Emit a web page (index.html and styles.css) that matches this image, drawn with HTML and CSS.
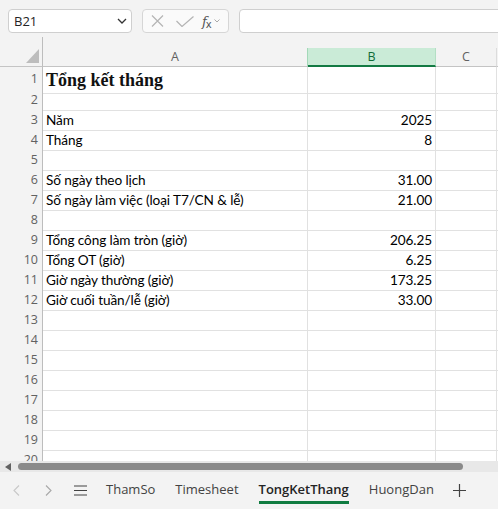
FILE: index.html
```html
<!DOCTYPE html>
<html lang="vi">
<head>
<meta charset="utf-8">
<title>TongKetThang</title>
<link rel="stylesheet" href="styles.css">
</head>
<body>
<div class="app">
  <div class="toolbar">
    <div class="namebox">
      <span class="nb-text">B21</span>
      <svg class="nb-chev" width="10" height="6" viewBox="0 0 10 6"><polyline points="1,1 5,5 9,1" fill="none" stroke="#333" stroke-width="1.3"/></svg>
    </div>
    <div class="fxbtns">
      <svg class="ic-x" width="13" height="12" viewBox="0 0 13 12"><path d="M1 0.5 L12 11.5 M12 0.5 L1 11.5" stroke="#b4b4b4" stroke-width="1.2" fill="none"/></svg>
      <svg class="ic-check" width="18" height="11" viewBox="0 0 18 11"><polyline points="0.5,5 6,10.5 17.5,0.5" fill="none" stroke="#b4b4b4" stroke-width="1.2"/></svg>
      <span class="fx">f<span class="fx-sub">x</span></span>
      <svg class="ic-chev-s" width="6" height="4" viewBox="0 0 6 4"><polyline points="0.5,0.5 3,3 5.5,0.5" fill="none" stroke="#aaa" stroke-width="1"/></svg>
    </div>
    <div class="formula"></div>
  </div>

  <div class="sheet">
    <div class="hdr-row">
      <div class="corner"><svg class="corner-tri" width="13" height="14" viewBox="0 0 13 14"><polygon points="0,14 13,14 13,0" fill="#bdbdbd"/></svg></div>
      <div class="colh colh-a">A</div>
      <div class="colh colh-b">B</div>
      <div class="colh colh-c">C</div>
      <div class="colh colh-rest"></div>
    </div>

    <div class="row row-title"><div class="rh">1</div><div class="cell title">Tổng kết tháng</div><div class="cell num"></div><div class="cell"></div><div class="cell"></div></div>
    <div class="row"><div class="rh">2</div><div class="cell"></div><div class="cell num"></div><div class="cell"></div><div class="cell"></div></div>
    <div class="row"><div class="rh">3</div><div class="cell">Năm</div><div class="cell num">2025</div><div class="cell"></div><div class="cell"></div></div>
    <div class="row"><div class="rh">4</div><div class="cell">Tháng</div><div class="cell num">8</div><div class="cell"></div><div class="cell"></div></div>
    <div class="row"><div class="rh">5</div><div class="cell"></div><div class="cell num"></div><div class="cell"></div><div class="cell"></div></div>
    <div class="row"><div class="rh">6</div><div class="cell">Số ngày theo lịch</div><div class="cell num">31.00</div><div class="cell"></div><div class="cell"></div></div>
    <div class="row"><div class="rh">7</div><div class="cell">Số ngày làm việc (loại T7/CN &amp; lễ)</div><div class="cell num">21.00</div><div class="cell"></div><div class="cell"></div></div>
    <div class="row"><div class="rh">8</div><div class="cell"></div><div class="cell num"></div><div class="cell"></div><div class="cell"></div></div>
    <div class="row"><div class="rh">9</div><div class="cell">Tổng công làm tròn (giờ)</div><div class="cell num">206.25</div><div class="cell"></div><div class="cell"></div></div>
    <div class="row"><div class="rh">10</div><div class="cell">Tổng OT (giờ)</div><div class="cell num">6.25</div><div class="cell"></div><div class="cell"></div></div>
    <div class="row"><div class="rh">11</div><div class="cell">Giờ ngày thường (giờ)</div><div class="cell num">173.25</div><div class="cell"></div><div class="cell"></div></div>
    <div class="row"><div class="rh">12</div><div class="cell">Giờ cuối tuần/lễ (giờ)</div><div class="cell num">33.00</div><div class="cell"></div><div class="cell"></div></div>
    <div class="row"><div class="rh">13</div><div class="cell"></div><div class="cell num"></div><div class="cell"></div><div class="cell"></div></div>
    <div class="row"><div class="rh">14</div><div class="cell"></div><div class="cell num"></div><div class="cell"></div><div class="cell"></div></div>
    <div class="row"><div class="rh">15</div><div class="cell"></div><div class="cell num"></div><div class="cell"></div><div class="cell"></div></div>
    <div class="row"><div class="rh">16</div><div class="cell"></div><div class="cell num"></div><div class="cell"></div><div class="cell"></div></div>
    <div class="row"><div class="rh">17</div><div class="cell"></div><div class="cell num"></div><div class="cell"></div><div class="cell"></div></div>
    <div class="row"><div class="rh">18</div><div class="cell"></div><div class="cell num"></div><div class="cell"></div><div class="cell"></div></div>
    <div class="row"><div class="rh">19</div><div class="cell"></div><div class="cell num"></div><div class="cell"></div><div class="cell"></div></div>
    <div class="row"><div class="rh">20</div><div class="cell"></div><div class="cell num"></div><div class="cell"></div><div class="cell"></div></div>
  </div>

  <div class="hscroll">
    <svg class="hs-arrow" width="6" height="8" viewBox="0 0 6 8"><polygon points="6,0 6,8 0,4" fill="#616161"/></svg>
    <div class="hs-thumb"></div>
  </div>

  <div class="tabbar">
    <div class="nav"><svg width="7" height="11" viewBox="0 0 7 11"><polyline points="6,0.5 1,5.5 6,10.5" fill="none" stroke="#c8c8c8" stroke-width="1.1"/></svg></div>
    <div class="nav"><svg width="7" height="11" viewBox="0 0 7 11"><polyline points="1,0.5 6,5.5 1,10.5" fill="none" stroke="#a8a8a8" stroke-width="1.1"/></svg></div>
    <div class="nav"><svg width="13" height="11" viewBox="0 0 13 11"><path d="M0 1 H13 M0 5.5 H13 M0 10 H13" stroke="#424242" stroke-width="1.2" fill="none"/></svg></div>
    <div class="tab"><span class="tab-label">ThamSo</span></div>
    <div class="tab"><span class="tab-label">Timesheet</span></div>
    <div class="tab tab-active"><span class="tab-label">TongKetThang</span></div>
    <div class="tab"><span class="tab-label">HuongDan</span></div>
    <div class="nav nav-add"><svg width="13" height="13" viewBox="0 0 13 13"><path d="M6.5 0 V13 M0 6.5 H13" stroke="#424242" stroke-width="1.2" fill="none"/></svg></div>
  </div>
</div>
</body>
</html>
```

FILE: styles.css
```css
html, body {
  margin: 0;
  padding: 0;
  background: #f3f3f3;
}

.app {
  width: 498px;
  height: 509px;
  overflow: hidden;
  display: flex;
  flex-direction: column;
  background: #f3f3f3;
  font-family: "Open Sans", "Noto Sans", sans-serif;
}

/* ---------- toolbar ---------- */
.toolbar {
  height: 37px;
  flex: none;
  display: flex;
  align-items: flex-start;
  padding: 9px 0 0 8px;
  box-sizing: border-box;
  gap: 10px;
}

.namebox {
  width: 124px;
  height: 24px;
  box-sizing: border-box;
  border: 1px solid #cfcfcf;
  border-radius: 4px;
  background: #fff;
  display: flex;
  align-items: center;
  justify-content: space-between;
  padding: 0 4px 0 5px;
  flex: none;
}

.nb-text {
  font-family: "Open Sans", sans-serif;
  font-size: 13px;
  color: #242424;
}

.fxbtns {
  width: 87px;
  height: 24px;
  box-sizing: border-box;
  border: 1px solid #d6d6d6;
  border-radius: 4px;
  background: #fafafa;
  display: flex;
  align-items: center;
  padding: 0 0 0 8px;
  flex: none;
}

.ic-x { margin-right: 12px; }
.ic-check { margin-right: 8px; }

.fx {
  font-family: "DejaVu Serif", serif;
  font-style: italic;
  font-size: 13px;
  color: #555;
  line-height: 1;
  margin-right: 3px;
  letter-spacing: -1px;
}

.fx-sub {
  font-family: "DejaVu Sans", sans-serif;
  font-style: normal;
  font-size: 10px;
  position: relative;
  top: 2px;
}

.formula {
  width: 280px;
  height: 24px;
  box-sizing: border-box;
  border: 1px solid #cfcfcf;
  border-radius: 4px;
  background: #fff;
  flex: none;
}

/* ---------- sheet ---------- */
.sheet {
  height: 424px;
  flex: none;
  overflow: hidden;
  background: #fff;
}

.hdr-row,
.row {
  display: grid;
  grid-template-columns: 43px 265px 128px 61px 1fr;
}

.hdr-row {
  height: 30px;
  background: #f3f3f3;
  align-items: end;
}

.corner {
  height: 30px;
  box-sizing: border-box;
  border-right: 1px solid #bdbdbd;
  border-bottom: 1px solid #c4c4c4;
  display: flex;
  align-items: flex-end;
  justify-content: flex-end;
  padding: 0 3px 3px 0;
}

.colh {
  height: 19px;
  box-sizing: border-box;
  border-right: 1px solid #dcdcdc;
  border-bottom: 1px solid #c4c4c4;
  font-size: 12.5px;
  line-height: 18px;
  color: #616161;
  text-align: center;
}

.colh-a { border-right-color: #a3d8b8; }

.colh-b {
  background: #caebd7;
  color: #0f6b38;
  border-bottom: 2px solid #137a43;
  border-right-color: #b3dfc4;
}

.colh-rest { border-right: none; }

.row {
  height: 20px;
}

.row-title {
  height: 23px;
}

.rh {
  box-sizing: border-box;
  background: #f3f3f3;
  border-right: 1px solid #bdbdbd;
  border-bottom: 1px solid #e1e1e1;
  font-size: 12.5px;
  line-height: 20px;
  color: #616161;
  text-align: right;
  padding-right: 4px;
}

.row-title .rh { line-height: 24px; }

.cell {
  box-sizing: border-box;
  border-right: 1px solid #e1e1e1;
  border-bottom: 1px solid #e1e1e1;
  font-family: Lato, "Noto Sans", sans-serif;
  font-size: 13.6px;
  letter-spacing: -0.1px;
  line-height: 20px;
  color: #000;
  padding: 0 3px 0 3px;
  white-space: nowrap;
}

.num { text-align: right; }

.title {
  font-family: "Liberation Serif", serif;
  font-weight: bold;
  font-size: 18px;
  letter-spacing: 0;
  line-height: 26px;
  color: #111;
  overflow: visible;
  position: relative;
  z-index: 1;
}

/* ---------- horizontal scrollbar ---------- */
.hscroll {
  height: 11px;
  flex: none;
  background: #e8e8e8;
  display: flex;
  align-items: center;
  padding-left: 5px;
  box-sizing: border-box;
}

.hs-arrow { margin-right: 7px; }

.hs-thumb {
  width: 445px;
  height: 7px;
  border-radius: 4px;
  background: #8a8a8a;
}

/* ---------- tab bar ---------- */
.tabbar {
  height: 37px;
  flex: none;
  display: flex;
  align-items: center;
  background: #f3f3f3;
}

.nav {
  width: 32px;
  height: 37px;
  display: flex;
  align-items: center;
  justify-content: center;
}

.tab {
  height: 37px;
  display: flex;
  align-items: center;
  padding: 0 10px;
  font-size: 13px;
  color: #424242;
}

.tab-label {
  display: inline-block;
  line-height: 19px;
  padding: 3px 0 2px;
  border-bottom: 3px solid transparent;
}

.tab-active .tab-label {
  font-weight: 600;
  color: #242424;
  border-bottom-color: #107c41;
}
```
